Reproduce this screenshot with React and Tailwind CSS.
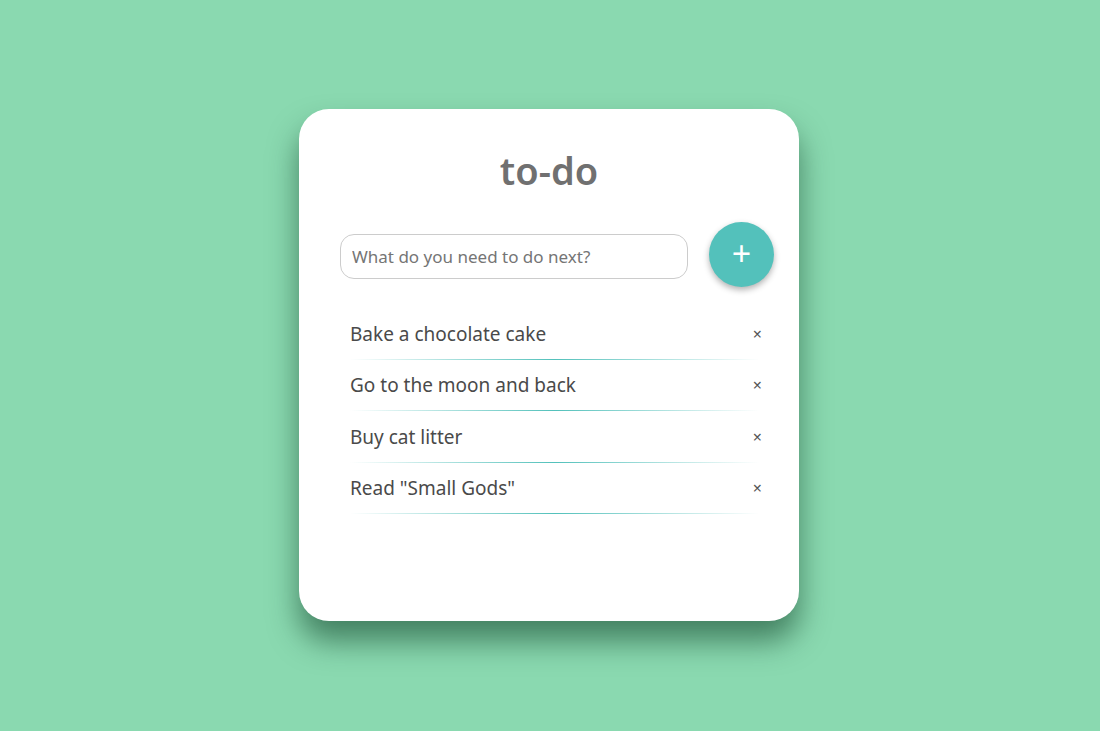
import React, { useState } from "react";

const initialTodos = [
  "Bake a chocolate cake",
  "Go to the moon and back",
  "Buy cat litter",
  'Read "Small Gods"',
];

const TodoItem = ({ text, onRemove }) => (
  <li className="relative flex items-center justify-between h-[51.5px] pl-[10px] -mr-[4px]">
    <span className="text-[19px] text-[#4a4a4a]">{text}</span>
    <button
      onClick={onRemove}
      className="text-[16px] leading-none text-[#555] cursor-pointer"
    >
      ×
    </button>
    {/* fading separator */}
    <div className="absolute left-[10px] right-[3px] bottom-0 h-[1px] bg-gradient-to-r from-transparent via-[#53c1bb] to-transparent" />
  </li>
);

const App = () => {
  const [todos, setTodos] = useState(initialTodos);
  const [value, setValue] = useState("");

  const addTodo = () => {
    if (!value.trim()) return;
    setTodos((prev) => [...prev, value.trim()]);
    setValue("");
  };

  return (
    <div className="min-h-screen w-full bg-[#8ad9b0] flex justify-center pt-[109px] pr-[2px] font-['Noto_Sans',sans-serif]">
      <div className="w-[500px] h-[512px] bg-white rounded-[30px] shadow-[0_20px_30px_rgba(20,70,45,0.6)] px-[41px] pt-[36px]">
        <h1 className="text-center text-[38px] leading-[50px] font-semibold text-[#707070]">
          to-do
        </h1>

        <div className="flex items-start justify-between mt-[27px]">
          <input
            type="text"
            value={value}
            onChange={(e) => setValue(e.target.value)}
            placeholder="What do you need to do next?"
            className="w-[348px] h-[45px] mt-[12px] rounded-[14px] border border-[#cccccc] px-[11px] text-[17px] text-[#555] placeholder-[#757575] outline-none"
          />
          <button
            onClick={addTodo}
            className="w-[65px] h-[65px] -mr-[16px] rounded-full bg-[#53c1bb] text-white text-[34px] leading-none font-normal flex items-center justify-center shadow-[0_3px_6px_rgba(0,0,0,0.3)] pb-[4px]"
          >
            +
          </button>
        </div>

        <ul className="mt-[21px]">
          {todos.map((t, i) => (
            <TodoItem
              key={i}
              text={t}
              onRemove={() => setTodos((prev) => prev.filter((_, j) => j !== i))}
            />
          ))}
        </ul>
      </div>
    </div>
  );
};

export default App;
